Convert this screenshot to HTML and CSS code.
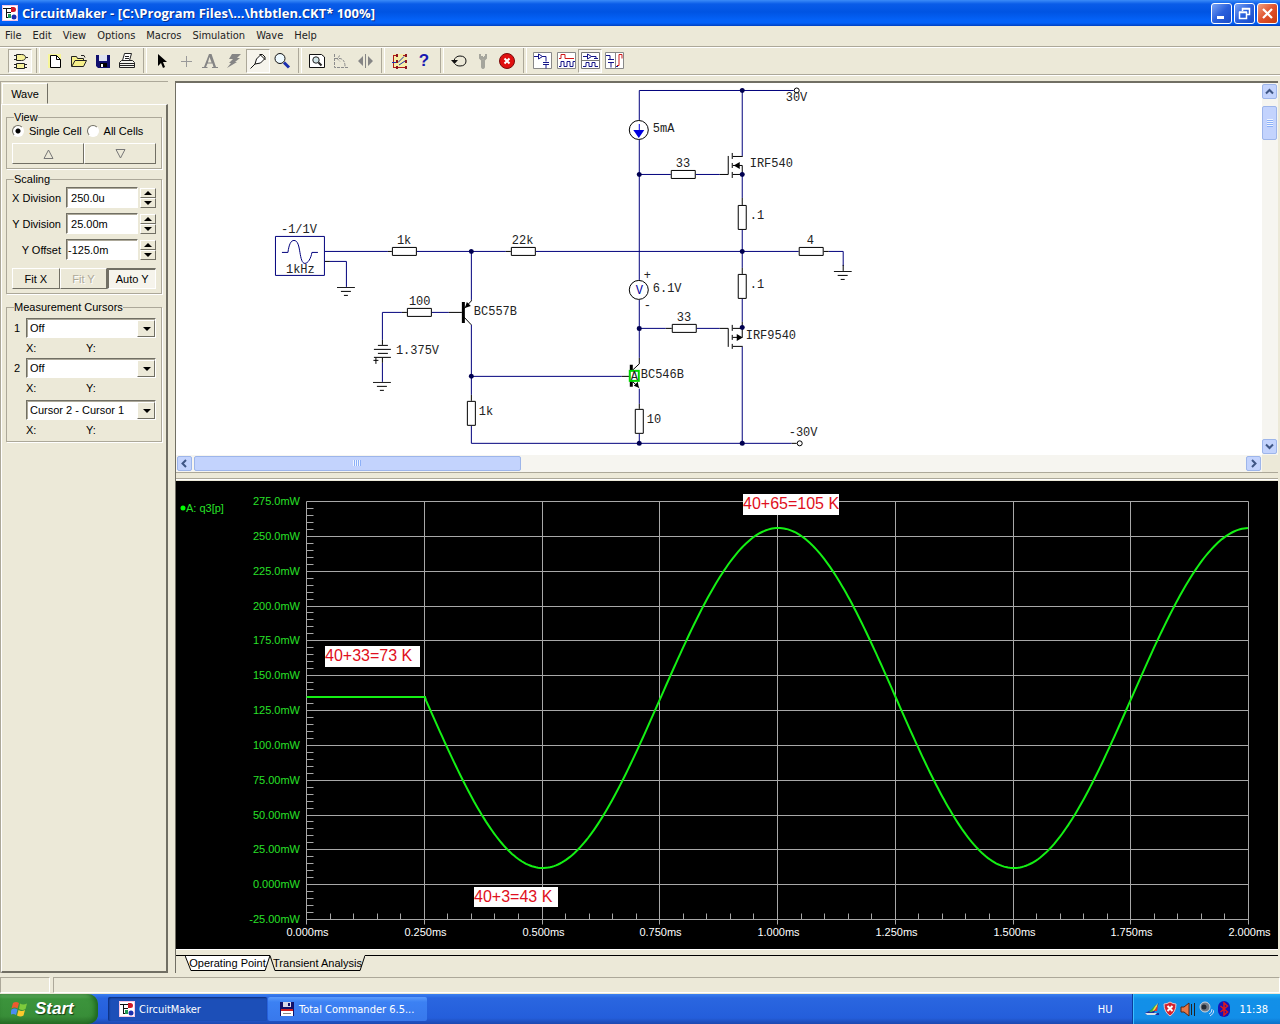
FILE: index.html
```html
<!DOCTYPE html>
<html lang="en">
<head>
    <meta charset="utf-8">
    <title>CircuitMaker</title>
    <meta name="viewport" content="width=device-width, initial-scale=1">
    <link rel="stylesheet" href="styles.css">
</head>
<body>
<!-- shared symbols -->
<svg class="defs" aria-hidden="true">
    <symbol id="logo" viewBox="0 0 16 16">
        <rect width="16" height="16" fill="#f6c6e4"/>
        <rect x="1" y="1" width="14" height="14" fill="#fff"/>
        <path d="M1 3.500h8M4.500 3v10M4 7.500h5M4 12.500h4" stroke="#111" fill="none"/>
        <path d="M9 2h2.500a2.500 2.500 0 0 1 0 5H9z" fill="#d01828"/>
        <circle cx="12" cy="12" r="2.500" fill="#1b2fae"/>
        <path d="M6 9h3v4H6z" fill="#1f9b54"/>
    </symbol>
    <symbol id="gnd" viewBox="0 0 19 10">
        <path d="M0 .5h18M4 4.500h10M7 8.500h4" stroke="#000" fill="none"/>
    </symbol>
</svg>

<div class="window">
    <header class="titlebar">
        <svg class="logo"><use href="#logo"/></svg>
        <h1>CircuitMaker - [C:\Program Files\...\htbtlen.CKT* 100%]</h1>
        <div class="caption">
            <button type="button" aria-label="Minimize"><svg viewBox="0 0 19 19"><path d="M5 13.500h7" stroke="#fff" stroke-width="3"/></svg></button>
            <button type="button" aria-label="Restore"><svg viewBox="0 0 19 19"><path d="M7.500 7V4.500h7v6H12M4.500 8.500h7v6h-7zM4 8h8M7 5h8" stroke="#fff" stroke-width="1.500" fill="none"/></svg></button>
            <button type="button" class="close" aria-label="Close"><svg viewBox="0 0 19 19"><path d="M5 5l9 9M14 5l-9 9" stroke="#fff" stroke-width="2.200"/></svg></button>
        </div>
    </header>

    <nav class="menubar">
        <a href="#">File</a>
        <a href="#">Edit</a>
        <a href="#">View</a>
        <a href="#">Options</a>
        <a href="#">Macros</a>
        <a href="#">Simulation</a>
        <a href="#">Wave</a>
        <a href="#">Help</a>
    </nav>

    <div class="toolbar">
        <button type="button" class="pressed" aria-label="Parts"><svg viewBox="0 0 20 20"><path d="M6.500 3.500h5c3 0 4 1.500 4 3s-1 3-4 3h-5zM6.500 12.500h8v5h-8z" fill="#f7f29a" stroke="#222"/><path d="M4 4.500h2M4 8.500h2M16 6.500h2M4 13.500h2M4 16.500h2M15 13.500h2M15 16.500h2" stroke="#222"/></svg></button>
        <span class="sep"></span>
        <button type="button" aria-label="New"><svg viewBox="0 0 20 20"><path d="M3 3h13v14H3z" fill="#ffff70" opacity=".6"/><path d="M5.500 4.500h6l4 4v8h-10z" fill="#fff" stroke="#000"/><path d="M11.500 4.500v4h4" fill="none" stroke="#000"/></svg></button>
        <button type="button" aria-label="Open"><svg viewBox="0 0 20 20"><path d="M2.500 15.500v-10h5l1 2h6v2h3l-3 6z" fill="#f6f08a" stroke="#222"/><path d="M3 15l3-5.500h9" fill="none" stroke="#222"/><path d="M12 4.500h3l1 2" fill="none" stroke="#222"/></svg></button>
        <button type="button" aria-label="Save"><svg viewBox="0 0 20 20"><path d="M3 4h14v13H5l-2-2z" fill="#10106e"/><path d="M6 4h8v6H6z" fill="#dfe3f0"/><path d="M7 12h7v4H7z" fill="#000"/><path d="M8 13h2v3H8z" fill="#fff"/></svg></button>
        <button type="button" aria-label="Print"><svg viewBox="0 0 20 20"><path d="M5.500 9.500l2-7h7l-2 7z" fill="#fff" stroke="#222"/><path d="M2.500 11.500l2-2h11l2 2v5h-15zM3 12.500h14M3 14.500h14" fill="#f4f4ee" stroke="#222"/><path d="M8 5.500h4M8 7.500h4" stroke="#222"/></svg></button>
        <span class="sep"></span>
        <button type="button" aria-label="Select"><svg viewBox="0 0 20 20"><path d="M6 3v12l3-3 2 5 2-1-2-5h4z" fill="#000"/></svg></button>
        <button type="button" aria-label="Wire"><svg viewBox="0 0 20 20"><path d="M10.500 5v11M5 10.500h11" stroke="#999"/></svg></button>
        <button type="button" aria-label="Text"><svg viewBox="0 0 20 20"><path d="M9 3h2.500l4.500 13h2v1h-6v-1h1.500l-1-3.500H7.500L6 16h1.500v1H2v-1h2zM9.500 6l-1.600 5.500h3.700z" fill="#858585"/></svg></button>
        <button type="button" aria-label="Delete"><svg viewBox="0 0 20 20"><path d="M8 3h9l-4 4h3l-5 4h2L3 17l4-5H5l4-4H5z" fill="#858585"/></svg></button>
        <button type="button" class="pressed" aria-label="Probe"><svg viewBox="0 0 20 20"><path d="M2.500 17.500l4.500-4.500M7 13l1.500-5 4-4 4 4-4 4z" fill="#fff" stroke="#111"/><path d="M11.500 3.500h3l2.500 2.500v3" fill="none" stroke="#111"/></svg></button>
        <button type="button" aria-label="Zoom"><svg viewBox="0 0 20 20"><circle cx="8" cy="7.500" r="5" fill="#eefaff" stroke="#111"/><path d="M12 11.500l5 5" stroke="#1b2fae" stroke-width="3"/></svg></button>
        <span class="sep"></span>
        <button type="button" aria-label="Fit to window"><svg viewBox="0 0 20 20"><path d="M2.500 3.500h12l3 2.500v10.500h-15z" fill="#fff" stroke="#111"/><circle cx="9" cy="9" r="3.200" fill="#cfe3e6" stroke="#222"/><path d="M11.500 11.500l3 3" stroke="#222" stroke-width="2"/></svg></button>
        <button type="button" aria-label="Rotate"><svg viewBox="0 0 20 20"><path d="M3.500 3v13.500H18M4 7.500h5q5 1 5 8M9 4.500L6 7.500l3 3" stroke="#8c8c8c" fill="none" stroke-dasharray="3 1"/></svg></button>
        <button type="button" aria-label="Mirror"><svg viewBox="0 0 20 20"><path d="M8 5v10l-5-5zM13 5v10l5-5z" fill="#858585"/><path d="M10.500 3v14" stroke="#858585"/></svg></button>
        <span class="sep"></span>
        <button type="button" aria-label="Digital"><svg viewBox="0 0 20 20"><path d="M3 3h14v14H3z" fill="#fdf27a" opacity=".5"/><path d="M3.500 4v12M3 4.500h4M3 16.500h4M13 4.500h3M8 16.500h8" stroke="#b01818" fill="none"/><path d="M2 11.500h6l6-6M9 14l6-4" stroke="#1b2fae" fill="none"/><path d="M6 3h2v3H6zM6 9h2v3H6zM6 15h2v3H6zM15 3h2v3h-2zM15 9h2v3h-2zM15 15h2v3h-2z" fill="#8b1420"/></svg></button>
        <button type="button" class="help" aria-label="Help">?</button>
        <span class="sep"></span>
        <button type="button" aria-label="Reset"><svg viewBox="0 0 20 20"><path d="M5 9.500c1-3 3-4.500 6-4.500 4 0 6 2 6 5s-2 5-6 5c-3 0-4-1-5-2" fill="none" stroke="#111"/><path d="M2 9h7l-3.500 4z" fill="#111"/></svg></button>
        <button type="button" aria-label="Step"><svg viewBox="0 0 20 20"><path d="M7 3v4l2 2v7q1 2 2 0V9l2-2V3M9 5v2h3V5" stroke="#a5a59c" stroke-width="2" fill="none"/></svg></button>
        <button type="button" aria-label="Stop"><svg viewBox="0 0 20 20"><circle cx="10" cy="10" r="7.500" fill="#e01010" stroke="#7a0c0c"/><path d="M7.500 7.500l5 5M12.500 7.500l-5 5" stroke="#fff" stroke-width="2"/></svg></button>
        <span class="sep"></span>
        <button type="button" aria-label="Schematic"><svg viewBox="0 0 20 20"><path d="M1.500 1.500h18v16h-18z" fill="#fff" stroke="#888"/><path d="M2 5.500h4M6.500 3v5l4-2.500zM10 5.500h4v5M11 11.500h6M11 13.500h6M14 13.500v4" fill="none" stroke="#16168a"/></svg></button>
        <button type="button" aria-label="Waveforms"><svg viewBox="0 0 20 20"><path d="M1.500 1.500h18v16h-18z" fill="#fff" stroke="#888"/><path d="M3 7.500h2v-4h4v4h9" fill="none" stroke="#d01818"/><path d="M3 15.500h2v-5h3v5h3v-5h3v5h3v-5h2" fill="none" stroke="#16168a"/></svg></button>
        <button type="button" class="pressed" aria-label="Split horizontally"><svg viewBox="0 0 20 20"><path d="M1.500 1.500h18v16h-18zM2 9.500h17" fill="#fff" stroke="#777"/><path d="M3 5.500h4M7.500 3v5l4-2.500zM11 5.500h5v2M14 7.500h4M3 15.500h3v-4h3v4h3v-4h3v4h3" fill="none" stroke="#16168a"/></svg></button>
        <button type="button" aria-label="Split vertically"><svg viewBox="0 0 20 20"><path d="M1.500 1.500h18v16h-18zM11.500 2v15" fill="#fff" stroke="#888"/><path d="M2 4.500h4v4M4 8.500h6M4 11.500h6M7 11.500v5M12 15.500h2" fill="none" stroke="#16168a"/><path d="M13 14.500h2v-11h3v4" fill="none" stroke="#d01818"/></svg></button>
    </div>

    <main class="work">
        <aside class="side">
            <div class="side-tabs"><button type="button">Wave</button></div>
            <form class="side-page">
                <fieldset>
                    <legend>View</legend>
                    <div class="radios">
                        <label><input type="radio" name="cells" checked>Single Cell</label>
                        <label><input type="radio" name="cells">All Cells</label>
                    </div>
                    <div class="buttons">
                        <button type="button" aria-label="Previous cell"><svg viewBox="0 0 11 10"><path d="M5.500 1l4.500 8.500h-9z" fill="none" stroke="#777"/></svg></button>
                        <button type="button" aria-label="Next cell"><svg viewBox="0 0 11 10"><path d="M5.500 9l4.500-8.500h-9z" fill="none" stroke="#777"/></svg></button>
                    </div>
                </fieldset>

                <fieldset class="scaling">
                    <legend>Scaling</legend>
                    <div class="row">
                        <label for="xdiv">X Division</label>
                        <input id="xdiv" type="text" value=" 250.0u">
                        <span class="spin"><button type="button" aria-label="X up"></button><button type="button" class="down" aria-label="X down"></button></span>
                    </div>
                    <div class="row">
                        <label for="ydiv">Y Division</label>
                        <input id="ydiv" type="text" value=" 25.00m">
                        <span class="spin"><button type="button" aria-label="Y up"></button><button type="button" class="down" aria-label="Y down"></button></span>
                    </div>
                    <div class="row">
                        <label for="yoff">Y Offset</label>
                        <input id="yoff" type="text" value="-125.0m">
                        <span class="spin"><button type="button" aria-label="Offset up"></button><button type="button" class="down" aria-label="Offset down"></button></span>
                    </div>
                    <div class="buttons">
                        <button type="button">Fit X</button>
                        <button type="button" disabled>Fit Y</button>
                        <button type="button" class="on">Auto Y</button>
                    </div>
                </fieldset>

                <fieldset class="cursors">
                    <legend>Measurement Cursors</legend>
                    <div class="cursor">
                        <label for="c1">1</label>
                        <span class="combo"><select id="c1"><option>Off</option></select></span>
                        <span class="xy"><span>X:</span><span>Y:</span></span>
                    </div>
                    <div class="cursor">
                        <label for="c2">2</label>
                        <span class="combo"><select id="c2"><option>Off</option></select></span>
                        <span class="xy"><span>X:</span><span>Y:</span></span>
                    </div>
                    <div class="cursor">
                        <span class="combo"><select aria-label="Cursor difference"><option>Cursor 2 - Cursor 1</option></select></span>
                        <span class="xy"><span>X:</span><span>Y:</span></span>
                    </div>
                </fieldset>
            </form>
        </aside>

        <section class="docs">
            <div class="schematic">
                <svg class="canvas" viewBox="176 83 1086 372" preserveAspectRatio="xMinYMin meet">
                    <!-- wires -->
                    <g class="wire">
                        <path d="M639.500 120V90.500H794M742.500 90V156M639.500 140V280M639.500 174.500H671M696 174.500H720M742.500 175V198"/>
                        <path d="M325 251.500H388M417 251.500H506M536 251.500H799M829 251.500H843.500V266M742.500 230V268M742.500 299V322"/>
                        <path d="M330 261.500H346.500V287M471.500 251V300M471.500 325V395M471.500 376.500H622M471.500 426V443.500H792"/>
                        <path d="M402 312.500H382.500V340M432 312.500H449M382.500 363V382"/>
                        <path d="M639.500 300V358M639.500 328.500H666M697 328.500H720M742.500 347V443M639.500 389V404M639.500 434V443"/>
                        <path d="M275.500 236.500h49v39h-49zM282 252.500h6c1-8 3-12 6-12 4 0 5 6 6 12s2 11 5 11 6-5 7-11h6"/>
                    </g>
                    <!-- parts -->
                    <g class="part">
                        <path d="M392.500 247.500h24v8h-24zM511.500 247.500h24v8h-24zM799.500 247.500h24v8h-24zM671.500 170.500h24v8h-24zM672.500 324.500h24v8h-24zM407.500 308.500h24v8h-24z"/>
                        <path d="M738.500 205.500h8v24h-8zM738.500 274.500h8v24h-8zM467.500 401.500h8v24h-8zM635.500 409.500h8v24h-8z"/>
                        <path d="M388 251.500h4M506 251.500h5M824 251.500h5M325 261.500h5M402 312.500h5M449 312.500h13M720 174.500h8.500V156M666 328.500h6M720 328.500h8.500V347M742.500 198v7M742.500 268v6M471.500 395v6M639.500 404v5M622 376.500h8M792 443.500h5"/>
                        <path d="M732.500 153v6M732.500 163v5M732.500 172v6M733 156.500h10M733 165.500h9.500v9H733"/>
                        <path d="M732.500 325v6M732.500 335v5M732.500 344v5M733 328.500h9.500v9H733M733 346.500h10M742.500 322v6"/>
                        <path d="M378 345.500h10M374 349.500h17M378 353.500h10M374 357.500h17M382.500 340v5M382.500 358v5M373.500 360.500h5M376 358v6"/>
                        <path d="M464 309l7.500-8v-1M464 317l7.500 8M632 371l7.500-7v-6M632 381l7.500 7"/>
                        <circle cx="639" cy="130" r="9.500"/>
                        <circle cx="639" cy="290" r="9.500"/>
                        <circle cx="797" cy="90.500" r="2.500"/>
                        <circle cx="800" cy="443.500" r="2.500"/>
                        <path d="M843.500 265v6"/>
                    </g>
                    <g class="solid">
                        <path d="M462 302h3v21h-3zM465 308l2-6 4 4zM630 365h3v22h-3zM639 388l-5-2 4-4z"/>
                        <path d="M734 165.500l6-3.500v7zM743 337.500l-6-3.500v7z"/>
                    </g>
                    <path d="M633.500 130h11l-5.500 8zM639 124h1v8h-1z" fill="#0000e0"/>
                    <g class="node">
                        <circle cx="742.500" cy="90.500" r="2.500"/>
                        <circle cx="639.500" cy="174.500" r="2.500"/>
                        <circle cx="742.500" cy="174.500" r="2.500"/>
                        <circle cx="471.500" cy="251.500" r="2.500"/>
                        <circle cx="742.500" cy="251.500" r="2.500"/>
                        <circle cx="639.500" cy="328.500" r="2.500"/>
                        <circle cx="742.500" cy="327.500" r="2.500"/>
                        <circle cx="471.500" cy="376.500" r="2.500"/>
                        <circle cx="639.500" cy="443.500" r="2.500"/>
                        <circle cx="742.500" cy="443.500" r="2.500"/>
                    </g>
                    <use href="#gnd" x="337" y="287" width="19" height="10"/>
                    <use href="#gnd" x="373" y="382" width="19" height="10"/>
                    <use href="#gnd" x="834" y="271" width="19" height="10"/>
                    <rect x="630" y="371" width="9" height="10" fill="#fff" stroke="#00d800" stroke-width="2"/>
                    <g class="names">
                        <text x="786" y="101">30V</text>
                        <text x="653" y="132">5mA</text>
                        <text x="676" y="167">33</text>
                        <text x="750" y="167">IRF540</text>
                        <text x="750" y="219">.1</text>
                        <text x="807" y="244">4</text>
                        <text x="750" y="288">.1</text>
                        <text x="677" y="321">33</text>
                        <text x="746" y="339">IRF9540</text>
                        <text x="641" y="378">BC546B</text>
                        <text x="647" y="423">10</text>
                        <text x="789" y="436">-30V</text>
                        <text x="653" y="292">6.1V</text>
                        <text x="644" y="279">+</text>
                        <text x="644" y="309">-</text>
                        <text x="281" y="233">-1/1V</text>
                        <text x="286" y="273">1kHz</text>
                        <text x="397" y="244">1k</text>
                        <text x="512" y="244">22k</text>
                        <text x="409" y="305">100</text>
                        <text x="474" y="315">BC557B</text>
                        <text x="396" y="354">1.375V</text>
                        <text x="479" y="415">1k</text>
                        <text x="631" y="380">A</text>
                        <text x="636" y="294" class="meter">V</text>
                    </g>
                </svg>
                <div class="scroll vertical">
                    <button type="button" aria-label="Scroll up"><svg viewBox="0 0 9 9"><path d="M1 6.500l3.500-3.500 3.500 3.500" /></svg></button>
                    <div class="track"><div class="thumb"><i></i></div></div>
                    <button type="button" aria-label="Scroll down"><svg viewBox="0 0 9 9"><path d="M1 2.500l3.500 3.500 3.500-3.500"/></svg></button>
                </div>
                <div class="scroll horizontal">
                    <button type="button" aria-label="Scroll left"><svg viewBox="0 0 9 9"><path d="M6 1l-3.500 3.500 3.500 3.500"/></svg></button>
                    <div class="track"><div class="thumb"><i></i></div></div>
                    <button type="button" aria-label="Scroll right"><svg viewBox="0 0 9 9"><path d="M3 1l3.500 3.500-3.500 3.500"/></svg></button>
                </div>
            </div>

            <div class="plot">
                <svg viewBox="0 0 1102 468" preserveAspectRatio="xMinYMin meet">
                    <path id="grid" class="grid"/>
                    <path id="trace" class="trace"/>
                    <g id="ylabels" class="ylabels"></g>
                    <g id="xlabels" class="xlabels"></g>
                    <circle cx="7" cy="27" r="2.500" fill="#0f0"/>
                    <text x="10" y="31" class="legend">A: q3[p]</text>
                    <g class="notes">
                        <rect x="567" y="13" width="96" height="21"/>
                        <text x="567" y="28">40+65=105 K</text>
                        <rect x="149" y="165" width="95" height="21"/>
                        <text x="149" y="180">40+33=73 K</text>
                        <rect x="298" y="406" width="84" height="20"/>
                        <text x="298" y="421">40+3=43 K</text>
                    </g>
                </svg>
            </div>

            <div class="sheets">
                <button type="button"><svg viewBox="0 0 86 16" preserveAspectRatio="none"><path d="M0 .5l6 15h75l5-15" fill="#fff" stroke="#000"/><path d="M0 .5h86" stroke="#000"/></svg><span>Operating Point</span></button>
                <button type="button" class="active"><svg viewBox="0 0 96 16" preserveAspectRatio="none"><path d="M0 .5l5 15h86l5-15" fill="#ece9d8" stroke="#000"/></svg><span>Transient Analysis</span></button>
                <span class="rest"></span>
            </div>
        </section>
    </main>

    <footer class="status"><span></span><span></span></footer>
</div>

<div class="taskbar">
    <button type="button" class="start">
        <svg viewBox="0 0 18 18"><path d="M2 3q3-2 6 0l-1.500 5.500q-3-2-6 0z" fill="#ee5a30"/><path d="M9 3.500q3 2 7 0L14.500 9q-3 2-6.500 0z" fill="#7ecb3c"/><path d="M.5 9.500q3-2 6 0L5 15q-3-2-6 0z" fill="#4b8df0"/><path d="M7.500 10q3 2 6.500 0l-1.500 5.500q-3 2-6.500 0z" fill="#fbc92d"/></svg>
        Start
    </button>
    <button type="button" class="task current"><svg><use href="#logo"/></svg>CircuitMaker</button>
    <button type="button" class="task"><svg viewBox="0 0 16 16"><path d="M1 1h14v14H1z" fill="#12126a"/><path d="M4 1h8v5H4z" fill="#d8d8e8"/><path d="M9 2h2v3H9z" fill="#12126a"/><path d="M2 8h12v7H2z" fill="#fff"/><path d="M2 8h12v2H2z" fill="#d02020"/><path d="M4 12.500h8" stroke="#888"/></svg>Total Commander 6.5...</button>
    <span class="lang">HU</span>
    <div class="tray">
        <svg viewBox="0 0 16 16"><path d="M1 12l6-3 8-7-5 10H15v2H3z" fill="#1c2f9c"/><path d="M6 11l8-9-2 7z" fill="#e8e040"/><path d="M5 11l7-8-4 8z" fill="#35b04a"/><path d="M10 10l4-6-1 6z" fill="#e03030"/><path d="M1 12h12l-2 2H3z" fill="#d8dfe8"/></svg>
        <svg viewBox="0 0 16 16"><path d="M8 1q3 2 6 2 0 8-6 12Q2 11 2 3q3 0 6-2z" fill="#d5202c" stroke="#e8c8cc"/><path d="M5.500 5l5 5M10.500 5l-5 5" stroke="#fff" stroke-width="2"/></svg>
        <svg viewBox="0 0 16 16"><path d="M1 6h3l5-4v13l-5-4H1z" fill="#e67848" stroke="#5b2410"/><path d="M11.500 3v11M14.500 2v13" stroke="#222"/></svg>
        <svg viewBox="0 0 16 16"><circle cx="7" cy="6" r="5" fill="#6f7884" stroke="#cfd6de"/><circle cx="6" cy="6" r="2.500" fill="#232a33"/><path d="M11 13q3-1 3-5M12 15q4-2 4-6" stroke="#cfe0ff" fill="none"/></svg>
        <svg viewBox="0 0 16 16"><rect x="2" width="12" height="16" rx="6" fill="#1414b8"/><path d="M4.500 5l7 6-3.500 3V2l3.500 3-7 6" fill="none" stroke="#e01818" stroke-width="1.500"/></svg>
        <span>11:38</span>
    </div>
</div>

<script type="text/javascript">
    (function () {
        var left = 130.5, right = 1072.5, top = 20.5, bottom = 438.5,
            cols = 8, rows = 12,
            dx = (right - left) / cols,
            dy = (bottom - top) / rows,
            d = '', i, x, y;

        function label(group, x, y, text) {
            var t = document.createElementNS('http://www.w3.org/2000/svg', 'text');
            t.setAttribute('x', x);
            t.setAttribute('y', y);
            t.textContent = text;
            document.getElementById(group).appendChild(t);
        }

        // vertical lines and time labels
        for (i = 0; i <= cols * 5; i++) {
            x = Math.floor(left + i * dx / 5) + 0.5;
            if (i % 5 === 0) {
                d += 'M' + x + ' ' + top + 'V' + (bottom + 5);
                label('xlabels', x + 1, bottom + 16.5, (i / 20).toFixed(3) + 'ms');
            } else {
                d += 'M' + x + ' ' + bottom + 'v-6';
            }
        }
        // horizontal lines and power labels
        for (i = 0; i <= rows * 5; i++) {
            y = Math.floor(top + i * dy / 5) + 0.5;
            if (i % 5 === 0) {
                var mw = 275 - i * 5;
                d += 'M' + left + ' ' + y + 'H' + right;
                label('ylabels', 124, y + 3.5, mw.toFixed(mw >= 100 ? 1 : mw === 0 ? 3 : 2) + 'mW');
            } else {
                d += 'M' + left + ' ' + y + 'h7';
            }
        }
        document.getElementById('grid').setAttribute('d', d);

        // one flat division, then the sine starts
        d = 'M' + left + ' 216H249';
        for (x = 250; x <= right; x += 2) {
            d += 'L' + x + ' ' + (217 + 170 * Math.sin(2 * Math.PI * (x - 249) / (dx * 4))).toFixed(1);
        }
        document.getElementById('trace').setAttribute('d', d);
    })();
</script>
</body>
</html>
```
FILE: styles.css
```css
* {
    box-sizing: border-box;
}
html, body {
    height: 100%;
    margin: 0;
}
body {
    display: flex;
    flex-direction: column;
    background: #ece9d8;
    color: #000;
    font-family: "Liberation Sans", Arial, sans-serif;
    font-size: 11px;
    overflow: hidden;
}
button, input, select {
    font: inherit;
    color: inherit;
    margin: 0;
    padding: 0;
    border: 0;
    border-radius: 0;
}
svg {
    display: block;
}
.defs {
    position: absolute;
    width: 0;
    height: 0;
}
.window {
    flex: 1;
    min-height: 0;
    display: flex;
    flex-direction: column;
}

/* title bar */
.titlebar {
    height: 26px;
    display: flex;
    align-items: center;
    padding: 0 2px;
    background: linear-gradient(#3c8cf8 0, #0a5ce8 4px, #0054e3 12px, #0462f8 20px, #0462f8 23px, #0040c0 26px);
}
.titlebar .logo {
    width: 16px;
    height: 16px;
}
.titlebar h1 {
    flex: 1;
    margin: 0 0 0 4px;
    font: bold 13px "Open Sans", "Noto Sans", sans-serif;
    color: #fff;
    text-shadow: 1px 1px #0a2f8c;
    white-space: nowrap;
}
.caption {
    display: flex;
    gap: 2px;
}
.caption button {
    width: 21px;
    height: 21px;
    border: 1px solid #fff;
    border-radius: 3px;
    background: linear-gradient(135deg, #7ba4f5, #2a60dc 50%, #1a4cc8);
}
.caption .close {
    background: linear-gradient(135deg, #f0a080, #e0512c 50%, #c83c10);
}

/* menu */
.menubar {
    height: 20px;
    display: flex;
    align-items: center;
    gap: 11px;
    padding: 0 5px 2px;
    font-family: "DejaVu Sans Condensed", "Noto Sans", sans-serif;
}
.menubar a {
    color: #222;
    text-decoration: none;
}

/* toolbar */
.toolbar {
    height: 29px;
    display: flex;
    align-items: center;
    padding-left: 8px;
    border-top: 1px solid #aca899;
    border-bottom: 1px solid #aca899;
    box-shadow: inset 0 1px #fff, 0 1px #fff;
}
.toolbar button {
    width: 24px;
    height: 24px;
    padding: 1px;
    border: 1px solid transparent;
    background: none;
}
.toolbar .pressed {
    border-color: #aca899 #fff #fff #aca899;
    background: #f6f4ec;
}
.toolbar svg {
    width: 20px;
    height: 20px;
}
.toolbar .help {
    font: bold 17px "Liberation Sans", sans-serif;
    color: #1818b0;
}
.sep {
    width: 11px;
    height: 25px;
    display: flex;
    justify-content: center;
}
.sep::before {
    content: "";
    width: 2px;
    border-left: 1px solid #aca899;
    border-right: 1px solid #fff;
}

/* work area */
.work {
    flex: 1;
    min-height: 0;
    display: flex;
    gap: 7px;
    padding: 6px 2px 0 0;
}
.side {
    width: 168px;
    flex: none;
    display: flex;
    flex-direction: column;
    border-top: 1px solid #aca899;
    border-left: 1px solid #aca899;
}
.side-tabs {
    padding: 1px 0 0 1px;
}
.side-tabs button {
    width: 46px;
    height: 21px;
    background: none;
    border: 1px solid;
    border-color: #fff #716f64 transparent #fff;
    font-size: 11px;
}
.side-page {
    flex: 1;
    display: flex;
    flex-direction: column;
    gap: 4px;
    padding: 6px 4px 0;
    border: 1px solid;
    border-color: #fff #716f64 #716f64 #fff;
    border-right-width: 2px;
    border-bottom-width: 2px;
}
fieldset {
    margin: 0;
    padding: 0 5px 4px;
    border: 1px solid #aca899;
    box-shadow: 1px 1px #fff;
}
legend {
    margin-left: 2px;
    padding: 0;
    line-height: 13px;
}
.radios {
    display: flex;
    gap: 5px;
    height: 14px;
    align-items: center;
    white-space: nowrap;
}
.radios label {
    display: flex;
    align-items: center;
    gap: 5px;
}
.radios input {
    appearance: none;
    width: 12px;
    height: 12px;
    border: 1px solid;
    border-color: #716f64 #fff #fff #716f64;
    border-radius: 50%;
    background: #fff;
}
.radios input:checked {
    background: radial-gradient(#000 2px, #fff 3px);
}
.buttons {
    display: flex;
    margin-top: 5px;
}
.buttons button {
    flex: 1;
    height: 21px;
    display: flex;
    align-items: center;
    justify-content: center;
    background: #ece9d8;
    border: 1px solid;
    border-color: #fff #716f64 #716f64 #fff;
}
.buttons svg {
    width: 11px;
    height: 10px;
}
.buttons button:disabled {
    color: #aca899;
    text-shadow: 1px 1px #fff;
}
.buttons .on {
    border-color: #716f64 #fff #fff #716f64;
    border-top-width: 2px;
    border-left-width: 2px;
    background: #f6f4ec;
}
.scaling {
    padding-top: 1px;
}
.scaling .buttons {
    margin-top: 8px;
}
.scaling .row {
    display: flex;
    align-items: center;
    height: 21px;
    margin-bottom: 5px;
}
.row label {
    flex: 1;
    padding-right: 5px;
    text-align: right;
    white-space: nowrap;
}
.row input {
    width: 72px;
    height: 21px;
    padding-left: 1px;
}
.row input, .combo select {
    background: #fff;
    border: 1px solid;
    border-color: #716f64 #fff #fff #716f64;
    box-shadow: inset 1px 1px #aca899;
}
.spin {
    width: 16px;
    margin-left: 2px;
    display: flex;
    flex-direction: column;
}
.spin button {
    height: 10px;
    display: flex;
    align-items: center;
    justify-content: center;
    background: #ece9d8;
    border: 1px solid;
    border-color: #fff #716f64 #716f64 #fff;
}
.spin button::before, .combo::after {
    content: "";
    border: 4px solid transparent;
    border-top: 0;
    border-bottom-color: #000;
}
.spin .down::before {
    border-top: 4px solid #000;
    border-bottom: 0;
}
.cursors {
    margin-top: 3px;
    padding-top: 4px;
    padding-bottom: 1px;
}
.cursor {
    display: grid;
    grid-template-columns: 14px 1fr;
    row-gap: 3px;
    margin-bottom: 3px;
    align-items: center;
}
.cursor:last-child {
    margin-top: 5px;
}
.cursor label {
    padding-left: 2px;
}
.combo {
    grid-column: 2;
    position: relative;
}
.combo select {
    display: block;
    width: 100%;
    height: 20px;
    padding-left: 3px;
    appearance: none;
}
.combo::before {
    content: "";
    position: absolute;
    top: 2px;
    right: 1px;
    bottom: 1px;
    width: 16px;
    background: #ece9d8;
    border: 1px solid;
    border-color: #fff #716f64 #716f64 #fff;
    pointer-events: none;
}
.combo::after {
    position: absolute;
    right: 5px;
    top: 9px;
    border-top: 4px solid #000;
    border-bottom: 0;
    pointer-events: none;
}
.xy {
    grid-column: 2;
    display: grid;
    grid-template-columns: 60px 1fr;
    line-height: 14px;
}

/* documents */
.docs {
    flex: 1;
    min-width: 0;
    display: flex;
    flex-direction: column;
    border-left: 1px solid #716f64;
}
.schematic {
    flex: 392 1 0;
    min-height: 0;
    display: grid;
    grid-template-columns: minmax(0, 1fr) 16px;
    grid-template-rows: minmax(0, 1fr) 17px;
    border-top: 2px solid #716f64;
    border-bottom: 1px solid #aca899;
    background: #ece9d8;
}
.canvas {
    width: 100%;
    height: 100%;
    background: #fff;
}
.wire {
    fill: none;
    stroke: #00007c;
}
.part {
    fill: none;
    stroke: #000;
}
.part circle {
    fill: #fff;
    fill-opacity: 0.2;
}
.solid {
    fill: #000;
}
.node {
    fill: #000050;
}
.names {
    font: 12px "Liberation Mono", "Courier New", monospace;
    fill: #222;
}
.names .meter {
    fill: #0000a0;
}
.scroll {
    display: flex;
    padding: 1px;
    background: #f6f5f0;
}
.vertical {
    flex-direction: column;
    padding-left: 0;
}
.scroll button {
    flex: none;
    width: 15px;
    height: 15px;
    display: flex;
    align-items: center;
    justify-content: center;
    border: 1px solid #9db5ea;
    border-radius: 2px;
    background: #c3d3fd;
}
.scroll svg {
    width: 9px;
    height: 9px;
    fill: none;
    stroke: #3f5685;
    stroke-width: 2;
}
.track {
    flex: 1;
    display: flex;
}
.thumb {
    display: flex;
    align-items: center;
    justify-content: center;
    border: 1px solid #9db5ea;
    border-radius: 2px;
    background: #c3d3fd;
}
.horizontal .thumb {
    width: 31%;
    margin-left: 2px;
}
.vertical .track {
    flex-direction: column;
}
.vertical .thumb {
    height: 10%;
    margin-top: 7px;
}
.horizontal .thumb i {
    width: 8px;
    height: 6px;
    background: repeating-linear-gradient(90deg, #eef4fe 0 1px, #8cb0f8 1px 2px);
}
.vertical .thumb i {
    width: 6px;
    height: 8px;
    background: repeating-linear-gradient(#eef4fe 0 1px, #8cb0f8 1px 2px);
}
.plot {
    flex: 472 1 0;
    min-height: 0;
    margin-top: 5px;
    border-top: 1px solid #aca899;
    border-bottom: 1px solid #fff;
    box-shadow: inset 0 1px #fff;
    padding-top: 2px;
}
.plot svg {
    width: 100%;
    height: 100%;
    background: #000;
}
.grid {
    fill: none;
    stroke: #a8a8a8;
}
.trace {
    fill: none;
    stroke: #14f014;
    stroke-width: 2;
}
.ylabels {
    fill: #28e028;
    text-anchor: end;
}
.xlabels {
    fill: #fff;
    text-anchor: middle;
}
.legend {
    fill: #28e028;
}
.notes {
    font-size: 16px;
    fill: #e01020;
}
.notes rect {
    fill: #fff;
}

/* sheet tabs */
.sheets {
    flex: none;
    height: 23px;
    display: flex;
    padding-top: 5px;
}
.sheets::before {
    content: "";
    width: 9px;
    border-top: 1px solid #000;
}
.sheets button {
    position: relative;
    height: 16px;
    width: 85px;
    background: none;
    white-space: nowrap;
}
.sheets .active {
    width: 95px;
}
.sheets svg {
    position: absolute;
    inset: 0;
    width: 100%;
    height: 100%;
}
.sheets span {
    position: relative;
}
.sheets .rest {
    flex: 1;
    border-top: 1px solid #000;
}

/* status bar */
.status {
    height: 21px;
    display: flex;
    gap: 3px;
    padding: 4px 0 1px;
}
.status span {
    flex: 1;
    border: 1px solid;
    border-color: #aca899 #fff #fff #aca899;
}
.status span:first-child {
    flex: 0 0 50px;
}

/* task bar */
.taskbar {
    flex: none;
    height: 30px;
    display: flex;
    align-items: center;
    background: linear-gradient(#3a80f0 0, #2a66e0 4px, #245edb 24px, #1c48b0);
    font-family: "DejaVu Sans Condensed", "Noto Sans", sans-serif;
    color: #fff;
}
.start {
    width: 98px;
    height: 30px;
    display: flex;
    align-items: center;
    gap: 6px;
    padding-left: 11px;
    margin-right: 10px;
    border-radius: 0 10px 10px 0;
    background: linear-gradient(#6cb86c 0, #3c943c 5px, #388e38 22px, #2a702a);
    box-shadow: inset -3px 0 5px #1d661d;
    font: italic bold 17px "Liberation Sans", sans-serif;
    text-shadow: 1px 1px 1px #143c14;
}
.start svg {
    width: 18px;
    height: 18px;
}
.task {
    width: 159px;
    height: 24px;
    display: flex;
    align-items: center;
    gap: 4px;
    padding-left: 11px;
    margin-right: 1px;
    border-radius: 2px;
    background: linear-gradient(#5c9cfc, #3c81f3 5px, #3878ec);
    white-space: nowrap;
}
.task.current {
    background: #1c4fb8;
    box-shadow: inset 1px 1px 2px #0c2c78;
}
.task svg {
    width: 16px;
    height: 16px;
    flex: none;
}
.lang {
    margin-left: auto;
    padding-right: 20px;
}
.tray {
    height: 30px;
    display: flex;
    align-items: center;
    gap: 2px;
    padding: 0 12px 0 11px;
    border-left: 1px solid #0c3c9c;
    background: linear-gradient(#20b0f8 0, #1290e8 5px, #128ee8 24px, #0c70c8);
    box-shadow: inset 1px 0 #3cc0ff;
}
.tray svg {
    width: 16px;
    height: 16px;
}
.tray span {
    margin-left: 5px;
}
```
